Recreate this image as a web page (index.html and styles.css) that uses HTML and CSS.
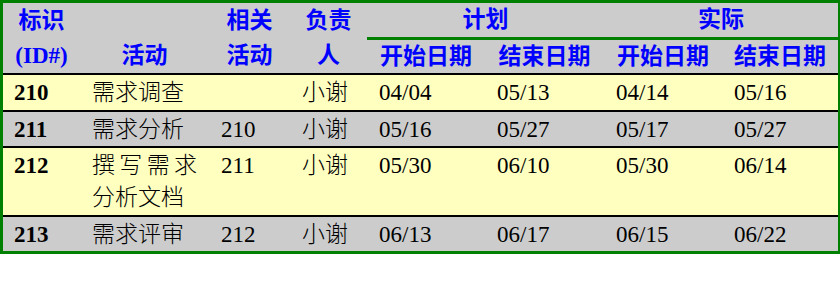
FILE: index.html
```html
<!DOCTYPE html>
<html lang="zh-CN">
<head>
<meta charset="utf-8">
<title>需求阶段进度</title>
<link rel="stylesheet" href="styles.css">
</head>
<body>
<table class="schedule">
  <colgroup>
    <col class="w-id">
    <col class="w-task">
    <col class="w-dep">
    <col class="w-owner">
    <col class="w-date-a">
    <col class="w-date-b">
    <col class="w-date-a">
    <col class="w-date-c">
  </colgroup>
  <thead>
    <tr>
      <th rowspan="2" class="head-span head-id">标识<br>(ID#)</th>
      <th rowspan="2" class="head-span head-low">活动</th>
      <th rowspan="2" class="head-span">相关<br>活动</th>
      <th rowspan="2" class="head-span">负责<br>人</th>
      <th colspan="2" class="head-group">计划</th>
      <th colspan="2" class="head-group">实际</th>
    </tr>
    <tr>
      <th class="head-sub">开始日期</th>
      <th class="head-sub">结束日期</th>
      <th class="head-sub">开始日期</th>
      <th class="head-sub">结束日期</th>
    </tr>
  </thead>
  <tbody>
    <tr class="row-light">
      <td class="cell-id">210</td>
      <td class="cell-task">需求调查</td>
      <td></td>
      <td>小谢</td>
      <td>04/04</td>
      <td>05/13</td>
      <td>04/14</td>
      <td>05/16</td>
    </tr>
    <tr class="row-dark">
      <td class="cell-id">211</td>
      <td class="cell-task">需求分析</td>
      <td>210</td>
      <td>小谢</td>
      <td>05/16</td>
      <td>05/27</td>
      <td>05/17</td>
      <td>05/27</td>
    </tr>
    <tr class="row-light">
      <td class="cell-id">212</td>
      <td class="cell-task">撰写需求分析文档</td>
      <td>211</td>
      <td>小谢</td>
      <td>05/30</td>
      <td>06/10</td>
      <td>05/30</td>
      <td>06/14</td>
    </tr>
    <tr class="row-dark row-last">
      <td class="cell-id">213</td>
      <td class="cell-task">需求评审</td>
      <td>212</td>
      <td>小谢</td>
      <td>06/13</td>
      <td>06/17</td>
      <td>06/15</td>
      <td>06/22</td>
    </tr>
  </tbody>
</table>
</body>
</html>
```

FILE: styles.css
```css
html, body {
  margin: 0;
  padding: 0;
  background: #ffffff;
}

.schedule {
  width: 840px;
  table-layout: fixed;
  border-collapse: separate;
  border-spacing: 0;
  border: 3px solid #008000;
  border-right-width: 2px;
  font-family: "Liberation Serif", "Noto Sans CJK SC", serif;
  font-size: 23px;
  color: #000000;
}

.w-id { width: 77px; }
.w-task { width: 129px; }
.w-dep { width: 81px; }
.w-owner { width: 77px; }
.w-date-a { width: 118px; }
.w-date-b { width: 119px; }
.w-date-c { width: 116px; }

/* header */
.schedule th {
  background: #cccccc;
  color: #0000ff;
  font-weight: bold;
  text-align: center;
  padding: 0;
  white-space: nowrap;
}

.head-span {
  line-height: 35px;
  vertical-align: middle;
  border-bottom: 2px solid #000000;
}

.head-id {
  padding-right: 4px;
}

.head-low {
  vertical-align: bottom;
}

.head-group {
  line-height: 34px;
  border-bottom: 3px solid #008000;
}

.head-sub {
  line-height: 33px;
  border-bottom: 2px solid #000000;
}

/* body rows */
.schedule td {
  padding: 2px 12px 0.5px 12px;
  line-height: 32px;
  font-weight: 300;
  vertical-align: top;
  text-align: left;
  border-bottom: 2px solid #000000;
}

.row-last td {
  border-bottom: none;
}

.row-light td { background: #ffffc0; }
.row-dark td { background: #cccccc; }

.schedule .cell-id {
  font-weight: bold;
  padding-left: 11px;
}

.schedule .cell-task {
  text-align: justify;
}
```
